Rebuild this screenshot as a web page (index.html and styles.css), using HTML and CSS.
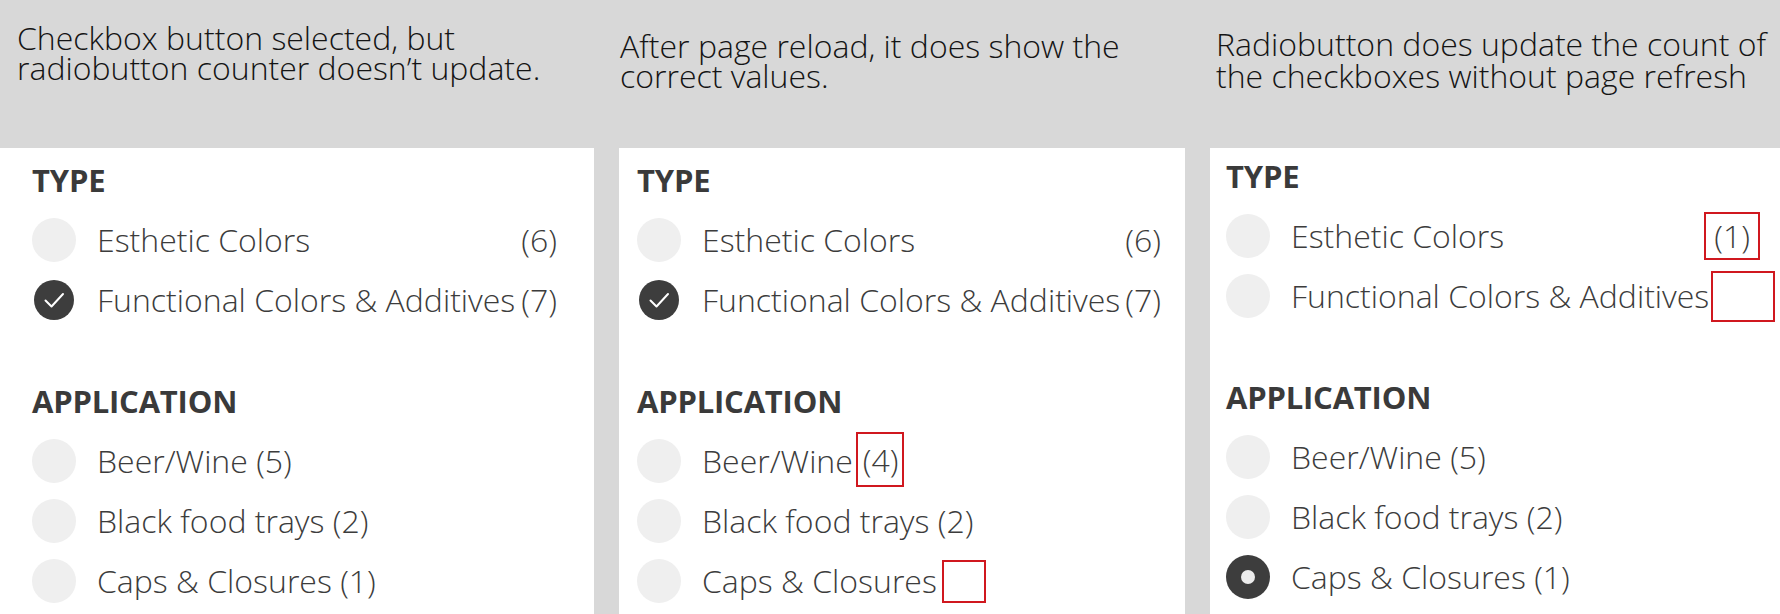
FILE: index.html
```html
<!DOCTYPE html>
<html lang="en">
<head>
<meta charset="utf-8">
<title>Filter counters</title>
<link rel="stylesheet" href="styles.css">
</head>
<body>
<div class="board">
  <p class="caption cap-1">Checkbox button selected, but<br>radiobutton counter doesn’t update.</p>
  <p class="caption cap-2">After page reload, it does show the<br>correct values.</p>
  <p class="caption cap-3">Radiobutton does update the count of<br>the checkboxes without page refresh</p>

  <section class="panel panel-1">
    <h2 class="heading">TYPE</h2>
    <div class="row type-row"><span class="dot"></span><span class="label">Esthetic Colors</span><span class="count">(6)</span></div>
    <div class="row type-row"><span class="dot checked"><svg viewBox="0 0 40 40" width="40" height="40"><path d="M11.5 20.5 L17.5 26.5 L29 14" fill="none" stroke="#fff" stroke-width="2" stroke-linecap="round" stroke-linejoin="round"/></svg></span><span class="label">Functional Colors &amp; Additives</span><span class="count">(7)</span></div>
    <h2 class="heading heading-app">APPLICATION</h2>
    <div class="row"><span class="dot"></span><span class="label">Beer/Wine (5)</span></div>
    <div class="row"><span class="dot"></span><span class="label">Black food trays (2)</span></div>
    <div class="row"><span class="dot"></span><span class="label">Caps &amp; Closures (1)</span></div>
  </section>

  <section class="panel panel-2">
    <h2 class="heading">TYPE</h2>
    <div class="row type-row"><span class="dot"></span><span class="label">Esthetic Colors</span><span class="count">(6)</span></div>
    <div class="row type-row"><span class="dot checked"><svg viewBox="0 0 40 40" width="40" height="40"><path d="M11.5 20.5 L17.5 26.5 L29 14" fill="none" stroke="#fff" stroke-width="2" stroke-linecap="round" stroke-linejoin="round"/></svg></span><span class="label">Functional Colors &amp; Additives</span><span class="count">(7)</span></div>
    <h2 class="heading heading-app">APPLICATION</h2>
    <div class="row"><span class="dot"></span><span class="label">Beer/Wine</span><span class="mark mark-4">(4)</span></div>
    <div class="row"><span class="dot"></span><span class="label">Black food trays (2)</span></div>
    <div class="row"><span class="dot"></span><span class="label">Caps &amp; Closures</span><span class="mark mark-empty-sm"></span></div>
  </section>

  <section class="panel panel-3">
    <h2 class="heading">TYPE</h2>
    <div class="row type-row"><span class="dot"></span><span class="label">Esthetic Colors</span><span class="count mark mark-1">(1)</span></div>
    <div class="row type-row"><span class="dot"></span><span class="label">Functional Colors &amp; Additives</span><span class="mark mark-empty-lg"></span></div>
    <h2 class="heading heading-app">APPLICATION</h2>
    <div class="row"><span class="dot"></span><span class="label">Beer/Wine (5)</span></div>
    <div class="row"><span class="dot"></span><span class="label">Black food trays (2)</span></div>
    <div class="row"><span class="dot radio-on"><span class="radio-core"></span></span><span class="label">Caps &amp; Closures (1)</span></div>
  </section>
</div>
</body>
</html>
```

FILE: styles.css
```css
* { box-sizing: border-box; }

html, body {
  margin: 0;
  padding: 0;
  background: #d8d8d8;
  width: 1780px;
  height: 614px;
  overflow: hidden;
}

body {
  font-family: "Open Sans", "Liberation Sans", sans-serif;
}

.board {
  display: grid;
  grid-template-columns: 594px 566px minmax(0, 1fr);
  grid-template-rows: 148px 466px;
  column-gap: 25px;
  height: 614px;
}

.caption {
  margin: 0;
  font-size: 32px;
  font-weight: 300;
  line-height: 30px;
  color: #141414;
  white-space: nowrap;
}

.cap-1 { padding: 23px 0 0 17px; }
.cap-2 { padding: 31px 0 0 1px; }
.cap-3 { padding: 28px 0 0 6px; line-height: 32px; }

.panel {
  background: #fff;
  color: #3c3c3c;
  padding-top: 12px;
  min-width: 0;
}

.panel-1 { padding-left: 32px; padding-right: 37px; }
.panel-2 { padding-left: 18px; padding-right: 24px; }
.panel-3 { padding-left: 16px; padding-right: 20px; padding-top: 8px; }

.heading {
  margin: 0 0 10px 0;
  font-size: 31px;
  font-weight: 700;
  line-height: 40px;
  color: #3a3a3a;
  letter-spacing: -0.2px;
}

.heading-app { margin-top: 51px; }

.row {
  display: flex;
  align-items: center;
  height: 60px;
  font-size: 32px;
  font-weight: 300;
  line-height: 1;
  white-space: nowrap;
}

.dot {
  flex: 0 0 44px;
  width: 44px;
  height: 44px;
  border-radius: 50%;
  background: #efefef;
  margin-right: 21px;
  display: flex;
  align-items: center;
  justify-content: center;
}

.dot.checked {
  background: transparent;
}

.dot.checked svg {
  display: block;
  border-radius: 50%;
  background: #3d3d3d;
}

.dot.radio-on {
  background: #3d3d3d;
}

.radio-core {
  width: 14px;
  height: 14px;
  border-radius: 50%;
  background: #ececec;
}

.label {
  flex: 0 0 auto;
}

.type-row .count {
  margin-left: auto;
}

.mark {
  display: inline-flex;
  align-items: center;
  border: 2px solid #d0181f;
  flex: 0 0 auto;
}

.mark-4 {
  margin-left: 3px;
  height: 55px;
  padding: 0 3px 0 5px;
  margin-top: -3px;
}

.mark-empty-sm {
  margin-left: 5px;
  width: 44px;
  height: 43px;
}

.mark-1 {
  height: 48px;
  padding: 0 8px 0 8px;
}

.mark-empty-lg {
  margin-left: 2px;
  width: 64px;
  height: 51px;
}
```
